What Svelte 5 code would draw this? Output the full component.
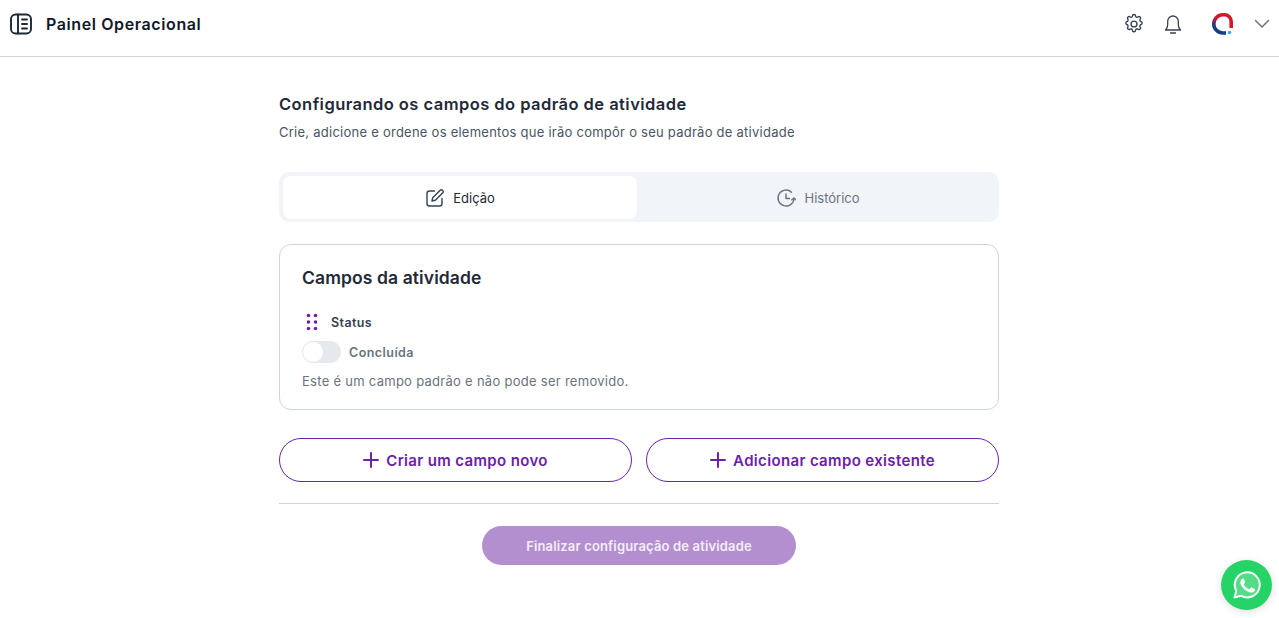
<script>
  const tabs = [
    { label: 'Edição', active: true },
    { label: 'Histórico', active: false }
  ];
  const actions = ['Criar um campo novo', 'Adicionar campo existente'];
</script>

<div class="page">
  <header class="topbar">
    <div class="brand">
      <svg width="24" height="24" viewBox="0 0 24 24" fill="none" stroke="#1f2937" stroke-width="1.9" stroke-linecap="round" stroke-linejoin="round">
        <rect x="2" y="2.5" width="20" height="19" rx="4.5" />
        <path d="M9 2.5v19M13 7.500h5M13 12h5M13 16.500h5" />
      </svg>
      <span>Painel Operacional</span>
    </div>
    <div class="tools">
      <svg class="gear" width="22" height="22" viewBox="0 0 24 24" fill="none" stroke="#374151" stroke-width="1.5" stroke-linecap="round" stroke-linejoin="round">
        <path d="M10.300 3.300a1.700 1.700 0 0 1 3.400 0 1.700 1.700 0 0 0 2.600 1.100 1.700 1.700 0 0 1 2.400 2.400 1.700 1.700 0 0 0 1.100 2.600 1.700 1.700 0 0 1 0 3.200 1.700 1.700 0 0 0-1.100 2.600 1.700 1.700 0 0 1-2.400 2.400 1.700 1.700 0 0 0-2.600 1.100 1.700 1.700 0 0 1-3.400 0 1.700 1.700 0 0 0-2.600-1.100 1.700 1.700 0 0 1-2.400-2.400 1.700 1.700 0 0 0-1.100-2.600 1.700 1.700 0 0 1 0-3.200 1.700 1.700 0 0 0 1.100-2.600 1.700 1.700 0 0 1 2.400-2.400 1.700 1.700 0 0 0 2.600-1.100z" />
        <circle cx="12" cy="12" r="3.200" />
      </svg>
      <svg class="bell" width="24" height="24" viewBox="0 0 24 24" fill="none" stroke="#374151" stroke-width="1.300" stroke-linecap="round" stroke-linejoin="round">
        <path d="M4.500 18h15c-1.600-1.500-2.200-3-2.200-5.500V9.300a5.300 5.300 0 0 0-10.600 0v3.200c0 2.500-.6 4-2.200 5.500z" />
        <path d="M9.500 21h5" />
      </svg>
      <svg class="logo" width="24" height="24" viewBox="0 0 24 24" fill="none">
        <defs>
          <linearGradient id="lg" x1="0.8" y1="0" x2="0.2" y2="1">
            <stop offset="0.42" stop-color="#d5172c" />
            <stop offset="0.8" stop-color="#123f84" />
          </linearGradient>
        </defs>
        <path d="M20.200 16V9.500a6.700 6.700 0 0 0-6.700-6.700H11.900a9.100 9.100 0 0 0 0 18.200H15" stroke="url(#lg)" stroke-width="3.600" />
        <circle cx="18.500" cy="20.500" r="1.800" fill="#3fa9e8" />
      </svg>
      <svg class="chev" width="16" height="16" viewBox="0 0 16 16" fill="none" stroke="#6b7280" stroke-width="1.500" stroke-linecap="round" stroke-linejoin="round">
        <path d="M1.500 4.500 8 11l6.500-6.500" />
      </svg>
    </div>
  </header>

  <main class="content">
    <h1>Configurando os campos do padrão de atividade</h1>
    <p class="sub">Crie, adicione e ordene os elementos que irão compôr o seu padrão de atividade</p>

    <div class="tabs">
      {#each tabs as tab}
        <div class="tab" class:active={tab.active}>
          {#if tab.active}
            <svg width="20" height="20" viewBox="0 0 20 20" fill="none" stroke="#374151" stroke-width="1.400" stroke-linecap="round" stroke-linejoin="round">
              <path d="M9.500 3H4.500A2.500 2.500 0 0 0 2 5.500v10A2.500 2.500 0 0 0 4.500 18h10a2.500 2.500 0 0 0 2.500-2.500v-5" />
              <path d="M7 13l.7-3.300L15.200 2.200a1.500 1.500 0 0 1 2.200 0l.4.400a1.500 1.500 0 0 1 0 2.200L10.300 12.300z" />
            </svg>
          {:else}
            <svg width="20" height="20" viewBox="0 0 20 20" fill="none" stroke="#6b7280" stroke-width="1.400" stroke-linecap="round" stroke-linejoin="round">
              <path d="M18 10.500A8 8 0 1 1 15.500 4.200" />
              <path d="M10 6v4.500h3.500" />
              <path d="M15.800 11.800 18 10l1.800 1.800" />
            </svg>
          {/if}
          <span>{tab.label}</span>
        </div>
      {/each}
    </div>

    <section class="card">
      <h2>Campos da atividade</h2>
      <div class="field-head">
        <svg width="12" height="18" viewBox="0 0 12 18" fill="#6b21a8">
          <circle cx="2.500" cy="2.500" r="1.800" /><circle cx="9.500" cy="2.500" r="1.800" />
          <circle cx="2.500" cy="9" r="1.800" /><circle cx="9.500" cy="9" r="1.800" />
          <circle cx="2.500" cy="15.500" r="1.800" /><circle cx="9.500" cy="15.500" r="1.800" />
        </svg>
        <span>Status</span>
      </div>
      <div class="toggle-row">
        <span class="toggle"><span class="knob"></span></span>
        <span class="toggle-label">Concluída</span>
      </div>
      <p class="note">Este é um campo padrão e não pode ser removido.</p>
    </section>

    <div class="actions">
      {#each actions as action}
        <button class="outline">
          <svg width="16" height="16" viewBox="0 0 16 16" stroke="#6b21a8" stroke-width="2" stroke-linecap="round">
            <path d="M8 1v14M1 8h14" />
          </svg>
          {action}
        </button>
      {/each}
    </div>

    <hr />

    <div class="finish">
      <button class="primary">Finalizar configuração de atividade</button>
    </div>
  </main>

  <div class="whats">
    <svg width="32" height="32" viewBox="0 0 32 32" fill="none">
      <path d="M3.500 28.500l1.800-6.600A12.500 12.500 0 1 1 10 26.700z" fill="rgba(255,255,255,.22)" stroke="#fff" stroke-width="2" stroke-linejoin="round" />
      <path d="M12.200 9.500c-.4 0-1 .2-1.500.8-.5.600-1.400 1.500-1.400 3.200s1.300 3.500 1.500 3.800c.2.200 2.500 4 6.300 5.400 3 1.200 3.700.9 4.300.8.700-.1 2.100-.9 2.400-1.700.3-.9.300-1.600.2-1.700-.1-.2-.3-.2-.7-.4l-2.500-1.200c-.3-.1-.6-.2-.9.200l-1.100 1.400c-.2.300-.4.300-.8.100-.4-.2-1.600-.6-3-1.900-1.100-1-1.900-2.200-2.100-2.600-.2-.4 0-.6.200-.8l.6-.7c.2-.2.200-.4.400-.6.100-.3.100-.5 0-.7l-1.100-2.700c-.3-.7-.6-.7-.8-.7z" fill="#fff" />
    </svg>
  </div>
</div>

<style>
  :global(body) {
    margin: 0;
    background: #fff;
    font-family: Inter, "Noto Sans", sans-serif;
    overflow: hidden;
  }
  .page {
    position: relative;
    height: 618px;
    overflow: hidden;
  }
  .topbar {
    height: 56px;
    border-bottom: 1px solid #d1d5db;
    display: flex;
    align-items: center;
    justify-content: space-between;
    padding: 0 9px;
  }
  .brand {
    display: flex;
    align-items: center;
    gap: 13px;
    font-size: 16px;
    letter-spacing: 0.6px;
    font-weight: 600;
    color: #111827;
    margin-top: -9px;
  }
  .tools {
    display: flex;
    align-items: center;
    margin-top: -8px;
  }
  .gear { margin-right: 16px; }
  .bell { margin-right: 26px; }
  .logo { margin-right: 19px; }
  .content {
    width: 720px;
    margin-left: 279px;
    padding-top: 36px;
  }
  h1 {
    margin: 0;
    font-size: 16.500px;
    letter-spacing: 0.45px;
    line-height: 22px;
    font-weight: 600;
    color: #1f2937;
  }
  .sub {
    margin: 7px 0 0;
    font-size: 13px;
    letter-spacing: 0.25px;
    line-height: 20px;
    color: #4b5563;
  }
  .tabs {
    margin-top: 30px;
    height: 50px;
    box-sizing: border-box;
    padding: 4px 4px 3px;
    background: #f1f5f9;
    border-radius: 10px;
    display: grid;
    grid-template-columns: 1fr 1fr;
    gap: 4px;
  }
  .tab {
    display: flex;
    align-items: center;
    justify-content: center;
    gap: 8px;
    font-size: 13px;
    color: #6b7280;
    border-radius: 8px;
  }
  .tab.active {
    background: #fff;
    color: #1f2937;
  }
  .card {
    margin-top: 22px;
    height: 166px;
    box-sizing: border-box;
    border: 1px solid #cbd5e1;
    border-radius: 12px;
    padding: 21px 22px 0;
  }
  h2 {
    margin: 0;
    font-size: 17.500px;
    letter-spacing: 0.1px;
    line-height: 24px;
    font-weight: 600;
    color: #1f2937;
  }
  .field-head {
    display: flex;
    align-items: center;
    gap: 13px;
    margin: 22px 0 0 4px;
    height: 20px;
    font-size: 12.500px;
    letter-spacing: 0.4px;
    font-weight: 600;
    color: #374151;
  }
  .toggle-row {
    display: flex;
    align-items: center;
    gap: 8px;
    margin-top: 9px;
  }
  .toggle {
    width: 39px;
    height: 22px;
    background: #e5e9ee;
    border-radius: 11px;
    position: relative;
    display: block;
  }
  .knob {
    position: absolute;
    left: 1px;
    top: 1px;
    width: 20px;
    height: 20px;
    background: #fff;
    border-radius: 50%;
  }
  .toggle-label {
    font-size: 12.500px;
    letter-spacing: 0.45px;
    font-weight: 600;
    color: #6b7280;
  }
  .note {
    margin: 9px 0 0;
    font-size: 13px;
    letter-spacing: 0.28px;
    line-height: 18px;
    color: #6b7280;
  }
  .actions {
    display: grid;
    grid-template-columns: 1fr 1fr;
    gap: 14px;
    margin-top: 28px;
  }
  .outline {
    height: 44px;
    border: 1px solid #6b21a8;
    border-radius: 22px;
    background: #fff;
    color: #6b21a8;
    font: 600 15px Inter, "Noto Sans", sans-serif;
    letter-spacing: 0.35px;
    display: flex;
    align-items: center;
    justify-content: center;
    gap: 7px;
  }
  hr {
    border: 0;
    border-top: 1px solid #cbd5e1;
    margin: 21px 0 0;
  }
  .finish {
    display: flex;
    justify-content: center;
    margin-top: 22px;
  }
  .primary {
    width: 314px;
    height: 39px;
    border: 0;
    border-radius: 20px;
    background: #b48fd0;
    color: #f3edf8;
    font: 600 13px Inter, "Noto Sans", sans-serif;
    letter-spacing: 0.15px;
  }
  .whats {
    position: absolute;
    left: 1221px;
    top: 560px;
    width: 51px;
    height: 50px;
    border-radius: 50%;
    background: #25d366;
    display: flex;
    align-items: center;
    justify-content: center;
    box-shadow: 0 2px 8px rgba(0,0,0,.12);
  }
</style>
